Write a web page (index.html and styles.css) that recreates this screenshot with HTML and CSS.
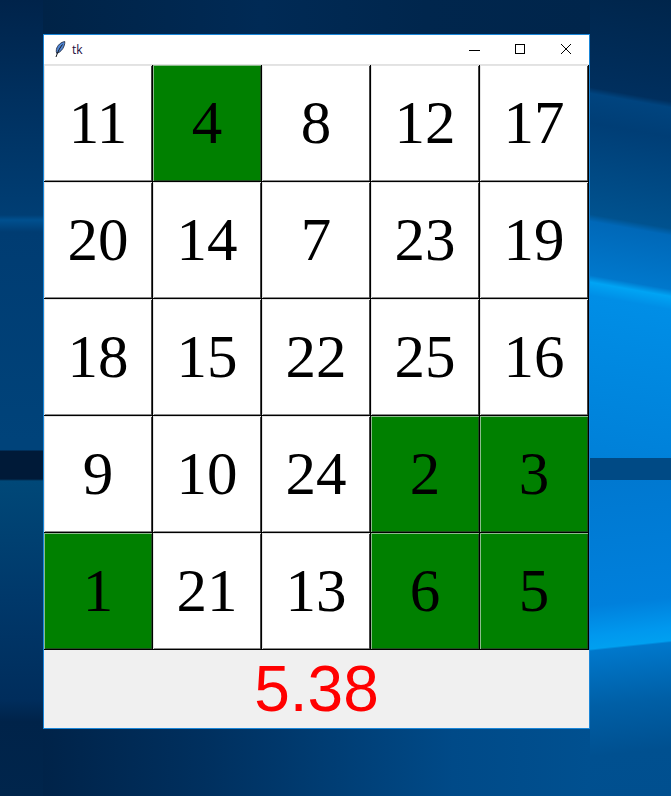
FILE: index.html
```html
<!DOCTYPE html>
<html lang="en">
<head>
<meta charset="utf-8">
<title>tk</title>
<link rel="stylesheet" href="styles.css">
</head>
<body>
<main class="window">
  <header class="titlebar">
    <svg class="feather" viewBox="0 0 12 17" aria-hidden="true">
      <path d="M10.800 .6C7.200 1 3.200 4.200 2.400 8.500c-.3 1.600-.1 3 .4 3.900 3.200-1 6-3.800 7.300-7.500.5-1.500.8-3 .7-4.300z" fill="#4f86d6" stroke="#262f45" stroke-width=".9"/>
      <path d="M8.500 3.500C6 6.500 3.800 10.500 2 16" fill="none" stroke="#14161a" stroke-width="1"/>
    </svg>
    <span class="title">tk</span>
    <div class="controls">
      <svg class="control" viewBox="0 0 46 29" aria-hidden="true"><path d="M18 15.500h11" stroke="#000" fill="none"/></svg>
      <svg class="control" viewBox="0 0 46 29" aria-hidden="true"><rect x="18.500" y="9.500" width="9" height="9" stroke="#000" fill="none"/></svg>
      <svg class="control" viewBox="0 0 46 29" aria-hidden="true"><path d="M18 9l10 10M28 9l-10 10" stroke="#000" fill="none"/></svg>
    </div>
  </header>
  <section class="grid">
    <div class="cell">11</div><div class="cell on">4</div><div class="cell">8</div><div class="cell">12</div><div class="cell">17</div>
    <div class="cell">20</div><div class="cell">14</div><div class="cell">7</div><div class="cell">23</div><div class="cell">19</div>
    <div class="cell">18</div><div class="cell">15</div><div class="cell">22</div><div class="cell">25</div><div class="cell">16</div>
    <div class="cell">9</div><div class="cell">10</div><div class="cell">24</div><div class="cell on">2</div><div class="cell on">3</div>
    <div class="cell on">1</div><div class="cell">21</div><div class="cell">13</div><div class="cell on">6</div><div class="cell on">5</div>
  </section>
  <footer class="timer">5.38</footer>
</main>
</body>
</html>
```
FILE: styles.css
```css
* { box-sizing: border-box; }
html, body { height: 100%; }
body {
  margin: 0;
  padding: 34px 0 0 43px;
  overflow: hidden;
  background-color: #00264d;
  background-repeat: no-repeat;
  background-image:
    linear-gradient(180deg, #004a85 0, #004a85 100%),
    linear-gradient(190deg, #00254b 0, #002f5e 100px, #00447f 106px, #003e76 135px, #00528f 225px, #0068b8 232px, #0078cc 285px, #00a4f4 292px, #008ee6 305px, #0080d8 100%),
    linear-gradient(174deg, #0080d8 0, #0078d0 26px, #0080dc 150px, #0098ee 180px, #00a0f0 193px, #0078cc 195px, #005fa6 250px, #005090 300px, #004f8f 100%),
    linear-gradient(180deg, #00234a 0, #00305f 100px, #003e74 215px, #00508f 220px, #003c72 232px, #00437a 440px, #00437a 450px, #001a38 451px, #001a38 479px, #004878 481px, #00386a 600px, #002d5c 700px, #002349 722px, #00254c 100%),
    linear-gradient(90deg, #002349 0, #00305f 30%, #004a88 75%, #005090 100%),
    linear-gradient(90deg, #002347 0, #002a55 40%, #00264d 70%, #00254b 100%);
  background-size:
    81px 22px,
    81px 458px,
    81px 341px,
    43px 100%,
    547px 67px,
    547px 34px;
  background-position:
    590px 458px,
    590px 0,
    590px 455px,
    0 0,
    43px 729px,
    43px 0;
}
.window {
  width: 547px;
  height: 695px;
  display: flex;
  flex-direction: column;
  background: #f0f0f0;
  border: 1px solid #1a86d8;
}
.titlebar {
  height: 30px;
  flex: none;
  display: flex;
  align-items: center;
  padding-left: 10px;
  background: #fff;
  border-bottom: 1px solid #e2e2e2;
}
.feather { width: 12px; height: 17px; flex: none; }
.title {
  margin-left: 6px;
  font: 12px "Open Sans", sans-serif;
  color: #1a0a3c;
}
.controls { margin-left: auto; display: flex; }
.control { width: 46px; height: 29px; display: block; }
.grid {
  height: 585px;
  flex: none;
  display: grid;
  grid-template-columns: repeat(5, 1fr);
  grid-template-rows: repeat(5, 1fr);
}
.cell {
  display: flex;
  align-items: center;
  justify-content: center;
  background: #fff;
  border-right: 1px solid #000;
  border-bottom: 1px solid #000;
  box-shadow: inset 1px 1px 0 #e4e4e4, inset -1px 0 0 #444, inset 0 -1px 0 #8a8a8a;
  font: 61px "Liberation Serif", serif;
  color: #000;
}
.on { box-shadow: inset 1px 1px 0 #8cbc8c, inset -1px 0 0 #1f4f1f, inset 0 -1px 0 #1f4f1f; background: #008000; }
.timer {
  flex: 1;
  display: flex;
  align-items: center;
  justify-content: center;
  font: 64px "Liberation Sans", sans-serif;
  color: #ff0000;
  background: #f0f0f0;
}
```
